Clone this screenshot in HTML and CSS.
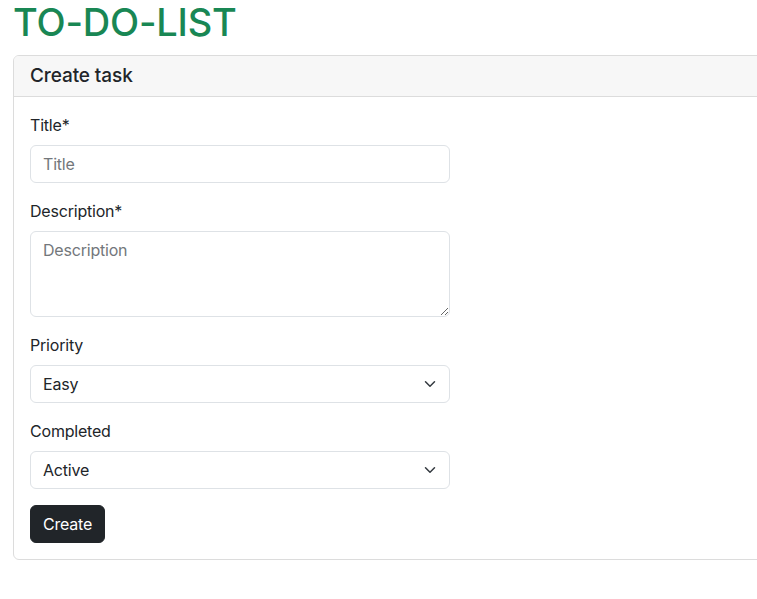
FILE: index.html
```html
<!DOCTYPE html>
<html lang="en">
<head>
<meta charset="utf-8">
<title>TO-DO-LIST</title>
<link rel="stylesheet" href="styles.css">
</head>
<body>
<div class="page">
  <h1 class="title">TO-DO-LIST</h1>
  <div class="card">
    <div class="card-header">Create task</div>
    <form class="card-body">
      <div class="field">
        <label class="label" for="title">Title*</label>
        <input class="control" id="title" type="text" placeholder="Title">
      </div>
      <div class="field">
        <label class="label" for="desc">Description*</label>
        <textarea class="control area" id="desc" rows="3" placeholder="Description"></textarea>
      </div>
      <div class="field">
        <label class="label" for="prio">Priority</label>
        <div class="select-wrap">
          <select class="control select" id="prio">
            <option>Easy</option>
            <option>Medium</option>
            <option>Hard</option>
          </select>
          <svg class="chev" viewBox="0 0 16 16" width="16" height="12"><path d="m2 5 6 6 6-6" fill="none" stroke="#343a40" stroke-width="2" stroke-linecap="round" stroke-linejoin="round"/></svg>
        </div>
      </div>
      <div class="field">
        <label class="label" for="done">Completed</label>
        <div class="select-wrap">
          <select class="control select" id="done">
            <option>Active</option>
            <option>Completed</option>
          </select>
          <svg class="chev" viewBox="0 0 16 16" width="16" height="12"><path d="m2 5 6 6 6-6" fill="none" stroke="#343a40" stroke-width="2" stroke-linecap="round" stroke-linejoin="round"/></svg>
        </div>
      </div>
      <button class="btn" type="button">Create</button>
    </form>
  </div>
</div>
</body>
</html>
```

FILE: styles.css
```css
html, body {
  margin: 0;
  padding: 0;
  background: #fff;
  overflow-x: hidden;
}
body {
  font-family: Inter, "Liberation Sans", Arial, sans-serif;
  font-size: 16px;
  line-height: 1.5;
  letter-spacing: -0.2px;
  color: #212529;
}
.page {
  padding-left: 13px;
  overflow: hidden;
}
.title {
  margin: 0 0 9px 0;
  font-size: 38px;
  line-height: 1.2;
  font-weight: 500;
  letter-spacing: -0.2px;
  color: #198754;
}
.card {
  width: 800px;
  border: 1px solid #dcdcdc;
  border-radius: 6px;
  background: #fff;
}
.card-header {
  padding: 8px 16px;
  font-size: 19px;
  line-height: 24px;
  font-weight: 500;
  letter-spacing: -0.1px;
  background: #f7f7f7;
  border-bottom: 1px solid #dcdcdc;
  border-radius: 5px 5px 0 0;
}
.card-body {
  padding: 16px;
  display: flex;
  flex-direction: column;
  align-items: flex-start;
}
.field {
  width: 420px;
  margin-bottom: 16px;
  display: flex;
  flex-direction: column;
}
.label {
  margin-bottom: 8px;
  line-height: 24px;
}
.control {
  box-sizing: border-box;
  width: 100%;
  height: 38px;
  padding: 6px 12px;
  font-family: inherit;
  font-size: 16px;
  line-height: 24px;
  letter-spacing: -0.2px;
  color: #212529;
  background: #fff;
  border: 1px solid #dee2e6;
  border-radius: 6px;
  margin: 0;
}
.control::placeholder {
  color: #73777b;
}
.area {
  height: 86px;
  resize: vertical;
  display: block;
}
.select-wrap {
  position: relative;
}
.select {
  appearance: none;
  -webkit-appearance: none;
  padding-right: 36px;
  display: block;
}
.chev {
  position: absolute;
  right: 12px;
  top: 13px;
  pointer-events: none;
}
.btn {
  font-family: inherit;
  font-size: 16px;
  line-height: 24px;
  letter-spacing: -0.2px;
  padding: 6px 12px;
  color: #fff;
  background: #212529;
  border: 1px solid #212529;
  border-radius: 6px;
}
```
